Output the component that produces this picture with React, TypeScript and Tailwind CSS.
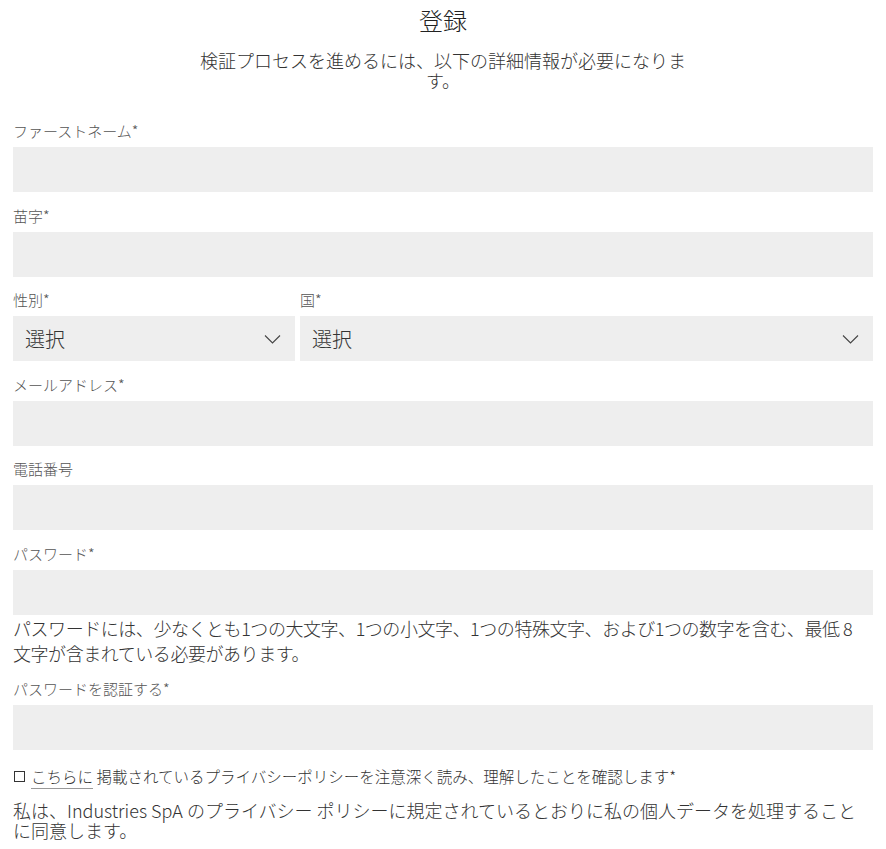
import React from "react";

const font = { fontFamily: '"Noto Sans CJK JP", "Noto Sans", sans-serif' };

const Field: React.FC<{ label: string; children?: React.ReactNode }> = ({ label, children }) => (
  <div className="mt-[13.5px] first:mt-0">
    <label className="block text-[15px] leading-[20px] text-[#555] font-light mb-[6px]">{label}</label>
    {children ?? <input className="block w-full h-[45px] bg-[#eeeeee] outline-none px-3" />}
  </div>
);

const Chevron = () => (
  <svg width="17" height="10" viewBox="0 0 17 10" fill="none" className="shrink-0">
    <path d="M1 1.5 L8.5 9 L16 1.5" stroke="#444" strokeWidth="1.1" />
  </svg>
);

const Select: React.FC = () => (
  <div className="flex items-center justify-between h-[45px] bg-[#eeeeee] pl-3 pr-[14px]">
    <span className="text-[20px] text-[#333] font-light">選択</span>
    <Chevron />
  </div>
);

export default function App() {
  return (
    <div style={font} className="bg-white text-[#333] px-[13px] pb-4">
      <h1 className="text-center text-[24px] leading-[30px] pt-[5px] font-light text-[#222]">登録</h1>
      <p className="mx-auto mt-[15px] max-w-[500px] text-center text-[18px] leading-[20px] font-light text-[#333]">
        検証プロセスを進めるには、以下の詳細情報が必要になります。
      </p>

      <div className="mt-[31px]">
        <Field label="ファーストネーム*" />
        <Field label="苗字*" />

        <div className="mt-[13.5px] grid grid-cols-[282px_1fr] gap-[5px]">
          <div>
            <label className="block text-[15px] leading-[20px] text-[#555] font-light mb-[6px]">性別*</label>
            <Select />
          </div>
          <div>
            <label className="block text-[15px] leading-[20px] text-[#555] font-light mb-[6px]">国*</label>
            <Select />
          </div>
        </div>

        <Field label="メールアドレス*" />
        <Field label="電話番号" />
        <Field label="パスワード*" />
        <p className="mt-[1px] text-[18px] leading-[25px] tracking-[-0.45px] font-light text-[#333]">
          パスワードには、少なくとも1つの大文字、1つの小文字、1つの特殊文字、および1つの数字を含む、<span className="whitespace-nowrap">最低 8</span> 文字が含まれている必要があります。
        </p>
        <Field label="パスワードを認証する*" />

        <div className="mt-[16px] flex items-center gap-[6px] text-[15.5px] leading-[20px] font-light text-[#333]">
          <span className="inline-block w-[11px] h-[11px] border border-[#333] ml-[1px]" />
          <span>
            <a className="underline decoration-[#999] underline-offset-[5px]">こちらに</a> 掲載されているプライバシーポリシーを注意深く読み、理解したことを確認します*
          </span>
        </div>

        <p className="mt-[14px] text-[18px] leading-[20px] font-light text-[#333]">
          私は、Industries SpA のプライバシー ポリシーに規定されているとおりに私の個人データを処理することに同意します。
        </p>
      </div>
    </div>
  );
}
